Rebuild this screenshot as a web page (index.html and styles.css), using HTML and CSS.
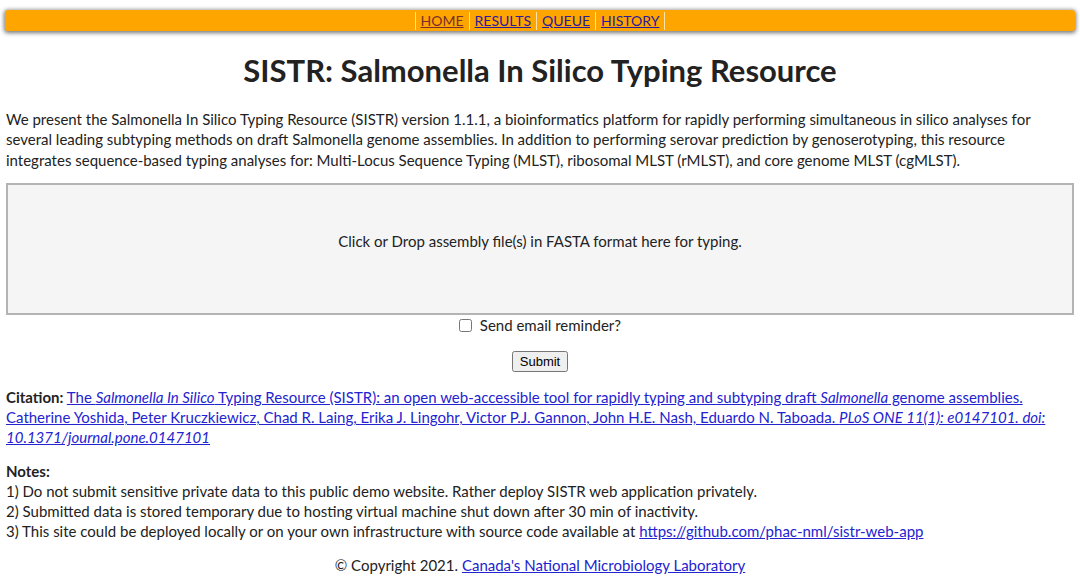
FILE: index.html
```html
<!DOCTYPE html>
<html lang="en">
  <head>
    <title>SISTR</title>
    <link rel="stylesheet" href="styles.css">
  </head>
  <body>
    <!-- top navigation -->
    <div class="topnav">
      <a href="#" class="current">HOME</a><a href="#">RESULTS</a><a href="#">QUEUE</a><a href="#">HISTORY</a>
    </div>

    <h1 class="title">SISTR: Salmonella In Silico Typing Resource</h1>

    <p class="intro">
      We present the Salmonella In Silico Typing Resource (SISTR) version 1.1.1, a bioinformatics platform for rapidly performing simultaneous in silico analyses for several leading subtyping methods on draft Salmonella genome assemblies. In addition to performing serovar prediction by genoserotyping, this resource integrates sequence-based typing analyses for: Multi-Locus Sequence Typing (MLST), ribosomal MLST (rMLST), and core genome MLST (cgMLST).
    </p>

    <!-- upload box -->
    <div class="dropzone">Click or Drop assembly file(s) in FASTA format here for typing.</div>

    <div class="reminder">
      <label><input type="checkbox" class="remind-box"> Send email reminder?</label>
    </div>

    <div class="submit-row">
      <button class="submit-btn">Submit</button>
    </div>

    <p class="citation">
      <b>Citation:</b>
      <a href="#">The <i>Salmonella In Silico</i> Typing Resource (SISTR): an open web-accessible tool for rapidly typing and subtyping draft <i>Salmonella</i> genome assemblies. Catherine Yoshida, Peter Kruczkiewicz, Chad R. Laing, Erika J. Lingohr, Victor P.J. Gannon, John H.E. Nash, Eduardo N. Taboada. <i>PLoS ONE 11(1): e0147101. doi: 10.1371/journal.pone.0147101</i></a>
    </p>

    <div class="notes">
      <b>Notes:</b><br>
      1) Do not submit sensitive private data to this public demo website. Rather deploy SISTR web application privately.<br>
      2) Submitted data is stored temporary due to hosting virtual machine shut down after 30 min of inactivity.<br>
      3) This site could be deployed locally or on your own infrastructure with source code available at <a href="#">https://github.com/phac-nml/sistr-web-app</a>
    </div>

    <div class="footer">
      &copy; Copyright 2021. <a href="#">Canada's National Microbiology Laboratory</a>
    </div>
  </body>
</html>
```

FILE: styles.css
```css
* {
  font-family: Lato, "Open Sans", sans-serif;
}

body {
  margin: 0;
  padding: 10px 6px 0 6px;
  color: #222;
  font-size: 15px;
  line-height: 20.4px;
}

a {
  color: #2323d0;
}

/* nav bar */
.topnav {
  background-color: orange;
  border-radius: 3px;
  box-shadow: 0 1px 4px 1px #777;
  margin: 0 -1px;
  height: 21px;
  display: flex;
  justify-content: center;
  align-items: center;
}

.topnav a {
  color: #2a1a9c;
  font-size: 14px;
  padding: 0 5px;
  border-left: 1px solid #ffe3a8;
  line-height: 18px;
}

.topnav a:last-child {
  border-right: 1px solid #ffe3a8;
}

.topnav a.current {
  color: #7a2e2a;
}

.title {
  text-align: center;
  font-size: 31px;
  font-weight: bold;
  margin: 19px 0 0 0;
  line-height: 40px;
}

.intro {
  margin: 19px 0 0 0;
}

.dropzone {
  margin-top: 13px;
  height: 82px;
  padding-top: 46px;
  border: 2px solid #b4b4b4;
  background-color: #f5f5f5;
  text-align: center;
}

.reminder {
  text-align: center;
}

.remind-box {
  margin: 0 4px 0 0;
  vertical-align: -1px;
}

.submit-row {
  text-align: center;
  margin-top: 14px;
}

.submit-btn {
  font-family: Arial, "Liberation Sans", sans-serif;
  font-size: 13px;
}

.citation {
  margin: 15px 0 0 0;
}

.notes {
  margin-top: 13px;
  line-height: 20.2px;
}

.footer {
  text-align: center;
  margin-top: 13px;
}
```
